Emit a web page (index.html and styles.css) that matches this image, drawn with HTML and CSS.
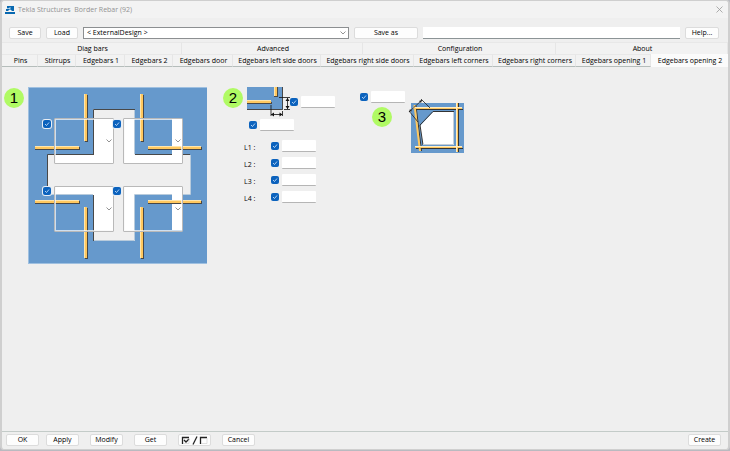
FILE: index.html
```html
<!DOCTYPE html>
<html lang="en">
<head>
<meta charset="utf-8">
<title>Tekla Structures Border Rebar (92)</title>
<link rel="stylesheet" href="styles.css">
</head>
<body>
<main class="window">
  <header class="titlebar">
    <svg class="logo" viewBox="0 0 10 8" aria-hidden="true"><path fill="#0868b0" d="M2 0h7v5H7L6 4H4L3 5H1V3h1zM0 6h10v2H0z"/><path d="M1 2.500h4M5 1v3" stroke="#e5f2fa" stroke-width=".7"/></svg>
    <span class="title">Tekla Structures&nbsp; Border Rebar (92)</span>
    <button class="close" aria-label="Close"><svg viewBox="0 0 7 7"><path d="M.5.5l6 6M6.500.5l-6 6" stroke="#999" stroke-width=".8"/></svg></button>
  </header>

  <div class="toolbar">
    <button class="btn">Save</button>
    <button class="btn">Load</button>
    <select class="preset" aria-label="Preset"><option>&lt; ExternalDesign &gt;</option></select>
    <button class="btn save-as">Save as</button>
    <input class="save-name" type="text" aria-label="Save as name">
    <button class="btn help">Help...</button>
  </div>

  <nav class="tabs">
    <div class="tab-row upper">
      <button class="tab">Diag bars</button><button class="tab">Advanced</button><button class="tab">Configuration</button><button class="tab">About</button>
    </div>
    <div class="tab-row lower">
      <button class="tab">Pins</button><button class="tab">Stirrups</button><button class="tab">Edgebars 1</button><button class="tab">Edgebars 2</button><button class="tab">Edgebars door</button><button class="tab">Edgebars left side doors</button><button class="tab">Edgebars right side doors</button><button class="tab">Edgebars left corners</button><button class="tab">Edgebars right corners</button><button class="tab">Edgebars opening 1</button><button class="tab active">Edgebars opening 2</button>
    </div>
  </nav>

  <section class="panel">
    <div class="group placement">
      <span class="badge">1</span>
      <div class="diagram">
        <svg class="opening" viewBox="28 87 179 177" aria-hidden="true">
          <path fill="#6699cc" d="M28 87h179v177H28z"/>
          <path d="M28 87.500H207M28.500 87V264M28 263.500H207" stroke="#9fc0e0" fill="none"/>
          <path fill="#efefef" d="M93 109h42v46h55v40h-55v46H93v-46H48v-40h45z"/>
          <path fill="none" stroke="#484848" d="M93.500 155V109.500H135M47.500 195V154.500H94M135 154.500H190M93.500 194V241"/>
          <path fill="none" stroke="#b8cbdc" d="M134.500 110V154M190.500 155V194.500H135M134.500 195V240.500H94M93 194.500H48"/>
          <path fill="#fff" d="M94 119h19v44H56v-8h38zM125 119h9v36h38v-36h11v44h-58zM56 187h57v43H94v-35H56zM125 187h58v43h-11v-35h-37v35h-10z"/>
          <g fill="none">
            <path stroke="#484848" d="M93.500 119V154.500H55M135 154.500H172M93.500 195V230"/>
            <path stroke="#b8cbdc" d="M134.500 119V154M56 194.500H93M172 194.500H134.500V230"/>
          </g>
          <path fill="#474747" d="M85 95h3v47h-3zM35 147h45v3H35zM141 95h3v47h-3zM148 147h54v3h-54zM35 201h45v3H35zM85 208h3v51h-3zM141 208h3v51h-3zM148 201h54v3h-54z"/>
          <path fill="#ffc85f" d="M84 94h3v47h-3zM35 146h44v3H35zM140 94h3v47h-3zM148 146h53v3h-53zM35 200h44v3H35zM84 207h3v51h-3zM140 207h3v51h-3zM148 200h53v3h-53z"/>
          <path fill="#ffe6ad" d="M84 94h1v47h-1zM35 146h44v1H35zM140 94h1v47h-1zM148 146h53v1h-53zM35 200h44v1H35zM84 207h1v51h-1zM140 207h1v51h-1zM148 200h53v1h-53z"/>
        </svg>
        <select class="combo top left" aria-label="Top left bars"><option></option></select>
        <select class="combo top right" aria-label="Top right bars"><option></option></select>
        <select class="combo bottom left" aria-label="Bottom left bars"><option></option></select>
        <select class="combo bottom right" aria-label="Bottom right bars"><option></option></select>
        <input type="checkbox" class="check pin top left" checked aria-label="Use top left bars">
        <input type="checkbox" class="check pin top right" checked aria-label="Use top right bars">
        <input type="checkbox" class="check pin bottom left" checked aria-label="Use bottom left bars">
        <input type="checkbox" class="check pin bottom right" checked aria-label="Use bottom right bars">
      </div>
    </div>

    <div class="group cover">
      <span class="badge">2</span>
      <div class="details">
        <div class="cover-top">
          <svg class="corner" viewBox="247 87 44 30" aria-hidden="true">
            <path fill="#6699cc" d="M247 87h36v23h-36z"/>
            <path fill="none" stroke="#484848" d="M247 109.500H282.500V87"/>
            <path fill="#484848" d="M247 102h25v2h-25zM277 87h1v10h-4v-1h3z"/>
            <path fill="#ffc85f" d="M247 101h24v2h-24zM274 87h3v9h-3z"/>
            <path fill="#ffe6ad" d="M247 100h24v1h-24zM274 87h1v9h-1z"/>
            <path fill="none" stroke="#111" stroke-width=".8" d="M279 97.500H290M284 109.500H290M287.500 98V109M271 105V116M282.500 111V116M271 114.500H282"/>
            <path fill="#111" d="M287.500 98l-2 3h4zM287.500 109l-2-3h4zM271 114.500l3-2v4zM282.500 114.500l-3-2v4z"/>
          </svg>
          <input type="checkbox" class="check" checked aria-label="Use vertical distance"><input type="text" class="field" aria-label="Vertical distance">
        </div>
        <div class="cover-side">
          <input type="checkbox" class="check" checked aria-label="Use horizontal distance"><input type="text" class="field" aria-label="Horizontal distance">
        </div>
        <div class="lengths">
          <div class="length"><label for="l1">L1 :</label><input type="checkbox" class="check" checked aria-label="Use L1"><input type="text" class="field" id="l1"></div>
          <div class="length"><label for="l2">L2 :</label><input type="checkbox" class="check" checked aria-label="Use L2"><input type="text" class="field" id="l2"></div>
          <div class="length"><label for="l3">L3 :</label><input type="checkbox" class="check" checked aria-label="Use L3"><input type="text" class="field" id="l3"></div>
          <div class="length"><label for="l4">L4 :</label><input type="checkbox" class="check" checked aria-label="Use L4"><input type="text" class="field" id="l4"></div>
        </div>
      </div>
    </div>

    <div class="group chamfer">
      <div class="chamfer-input">
        <div class="pair"><input type="checkbox" class="check" checked aria-label="Use chamfer length"><input type="text" class="field" aria-label="Chamfer length"></div>
        <span class="badge">3</span>
      </div>
      <svg class="skew" viewBox="408 98 56 55" aria-hidden="true">
        <path fill="#6699cc" d="M411 103h53v50h-53z"/>
        <path fill="#fff" d="M433 112h21v33h-31l-3-19z"/>
        <path fill="none" stroke="#333" d="M454 111.500H433L420 125l3 20"/>
        <path fill="none" stroke="#c5ced6" d="M453.500 112V144.500H423"/>
        <path fill="none" stroke="#333" d="M414 109.500H463M416 148.500H463M458.500 103V152M416 106L421.500 151"/>
        <path fill="none" stroke="#ffc85f" stroke-width="2" d="M413 108H462M415 147H462M457 103V152M414.500 105L420 151"/>
        <path fill="none" stroke="#ffeec5" d="M413 107.500H462M415 146.500H462M456.500 103V152"/>
        <path fill="none" stroke="#222" stroke-width=".8" d="M409 112L422 100M421 99l9 9M409 111l9 11"/>
        <path fill="#222" d="M409 112l1-3 2 2zM422 100l-1 3-2-2z"/>
      </svg>
    </div>
  </section>

  <footer class="footer">
    <div class="confirm">
      <button class="btn">OK</button>
      <button class="btn">Apply</button>
    </div>
    <button class="btn">Modify</button>
    <button class="btn">Get</button>
    <button class="btn" aria-label="Toggle all"><svg class="toggle" viewBox="0 0 27 9"><path fill="none" stroke="#222" stroke-width="1.300" d="M1.500 8V1.500H8M19.500 8V1.500H26M3 4l2 2 3-3"/><path stroke="#ccc" stroke-width=".6" d="M2 7.500h6V2M20 7.500h6V2" fill="none"/><path stroke="#222" stroke-width="1.300" d="M16 .5l-4 8"/></svg></button>
    <button class="btn">Cancel</button>
    <button class="btn create">Create</button>
  </footer>
</main>
</body>
</html>
```
FILE: styles.css
```css
* { box-sizing: border-box; }

body {
  margin: 0;
  background: #b9bac0;
  font: 7px/10px "Open Sans", "Noto Sans", sans-serif;
  color: #000;
}

button, input, select { font: inherit; color: inherit; margin: 0; }
svg { display: block; overflow: visible; }

.window {
  display: flex;
  flex-direction: column;
  min-height: calc(100vh - 1px);
  margin-bottom: 1px;
  background: #efefef;
  border: 1px solid #cfcfcf;
  border-left-width: 2px;
  border-right-width: 2px;
  border-radius: 4px;
}

.titlebar {
  display: flex;
  align-items: center;
  gap: 3px;
  height: 17px;
  padding: 0 5px 0 3px;
  background: #f3f3f3;
  border-radius: 3px 3px 0 0;
  color: #929292;
}
.logo { width: 10px; height: 8px; }
.close {
  width: 7px;
  height: 7px;
  margin-left: auto;
  padding: 0;
  border: 0;
  background: none;
}

.toolbar {
  display: flex;
  align-items: center;
  gap: 5px;
  padding: 9px 9px 3px 7px;
}

.btn {
  display: flex;
  align-items: center;
  justify-content: center;
  width: 32px;
  height: 12px;
  padding: 0;
  background: #fdfdfd;
  border: 1px solid #dcdcdc;
  border-radius: 2px;
}

.preset {
  appearance: none;
  width: 266px;
  height: 12px;
  padding: 0 3px;
  border: 1px solid #8c8f91;
  border-radius: 0;
  background: #fff url("data:image/svg+xml,%3Csvg xmlns='http://www.w3.org/2000/svg' width='6' height='4'%3E%3Cpath d='M.5.5l2.500 2.500 2.500-2.500' fill='none' stroke='%23777' stroke-width='.8'/%3E%3C/svg%3E") no-repeat right 2px center;
}
.save-as { width: 64px; }
.save-name {
  flex: 1;
  min-width: 0;
  height: 12px;
  border: 0;
  border-bottom: 1px solid #8c9496;
  background: #fff;
}
.help { width: 34px; }

.tab-row { display: grid; }
.upper { grid-template-columns: 180fr 181fr 193fr 172fr; }
.lower { grid-template-columns: 36fr 38fr 49fr 48fr 60fr 88fr 93fr 79fr 83fr 75fr 77fr; }
.tab {
  min-width: 0;
  height: 12px;
  padding: 0 0 0 2px;
  border: 0;
  border-top: 1px solid #e8e8e8;
  border-right: 1px solid #e6e6e6;
  background: #f2f2f2;
  white-space: nowrap;
}
.lower .tab { height: 13px; border-bottom: 1px solid #b5bdbb; }
.lower .active { background: #fbfbfb; border-color: #fbfbfb; }

.panel {
  display: flex;
  align-items: flex-start;
  flex: 1;
  padding: 20px 2px;
  border-bottom: 1px solid #c3cbc8;
}

.group { display: flex; align-items: flex-start; }

.badge {
  display: flex;
  align-items: center;
  justify-content: center;
  flex: none;
  width: 20px;
  height: 20px;
  margin-top: 1px;
  border-radius: 50%;
  background: #b0fa64;
  font: 15px/20px "Liberation Sans", sans-serif;
}

.placement { gap: 4px; margin-right: 16px; }
.diagram { position: relative; }
.opening { width: 179px; height: 177px; }

.combo {
  position: absolute;
  appearance: none;
  width: 60px;
  height: 46px;
  border: 1px solid #b9b9b9;
  border-radius: 1px;
  box-shadow: inset 0 0 0 1px #ffffffb0;
  background: url("data:image/svg+xml,%3Csvg xmlns='http://www.w3.org/2000/svg' width='6' height='4'%3E%3Cpath d='M.5.5l2.500 2.500 2.500-2.500' fill='none' stroke='%23777' stroke-width='.8'/%3E%3C/svg%3E") no-repeat right 1px center;
}
.combo.left { left: 26px; }
.combo.right { left: 95px; }
.combo.top { top: 31px; }
.combo.bottom { top: 99px; }

.check {
  appearance: none;
  flex: none;
  width: 8px;
  height: 8px;
  border-radius: 2px;
  background: #0b62bd url("data:image/svg+xml,%3Csvg xmlns='http://www.w3.org/2000/svg' width='8' height='8'%3E%3Cpath d='M2 4l1.500 1.500 2.500-3' fill='none' stroke='%23d8eaff' stroke-width='.8'/%3E%3C/svg%3E") center no-repeat;
}
.pin { position: absolute; box-shadow: 0 0 0 1px #e8eef5; }
.pin.left { left: 15px; }
.pin.right { left: 85px; }
.pin.top { top: 33px; }
.pin.bottom { top: 100px; }

.field {
  width: 34px;
  height: 12px;
  padding: 0 2px;
  border: 0;
  border-bottom: 1px solid #b5b5b5;
  border-radius: 1px;
  background: #fff;
}

.cover { margin-right: 25px; }
.details { min-width: 92px; padding-left: 1px; }
.cover-top, .cover-side, .length, .pair, .confirm { display: flex; align-items: center; gap: 3px; }
.cover-top { padding-left: 3px; }
.cover-top .check { margin-left: -4px; }
.corner { width: 44px; height: 30px; }
.cover-side { padding: 2px 0 0 5px; }
.lengths { display: grid; gap: 5px; padding-top: 9px; }
.length { height: 12px; }
.length label { width: 24px; padding-top: 4px; }

.chamfer { padding-top: 4px; }
.chamfer-input { display: grid; gap: 3px; }
.chamfer-input .badge { margin-left: 12px; }
.skew { width: 56px; height: 55px; margin: 7px 0 0 3px; }

.footer {
  display: flex;
  align-items: center;
  gap: 11px;
  padding: 2px 7px 3px 4px;
}
.confirm { gap: 7px; }
.footer .btn { width: 33px; }
.toggle { width: 27px; height: 9px; }
.create { margin-left: auto; }
```
